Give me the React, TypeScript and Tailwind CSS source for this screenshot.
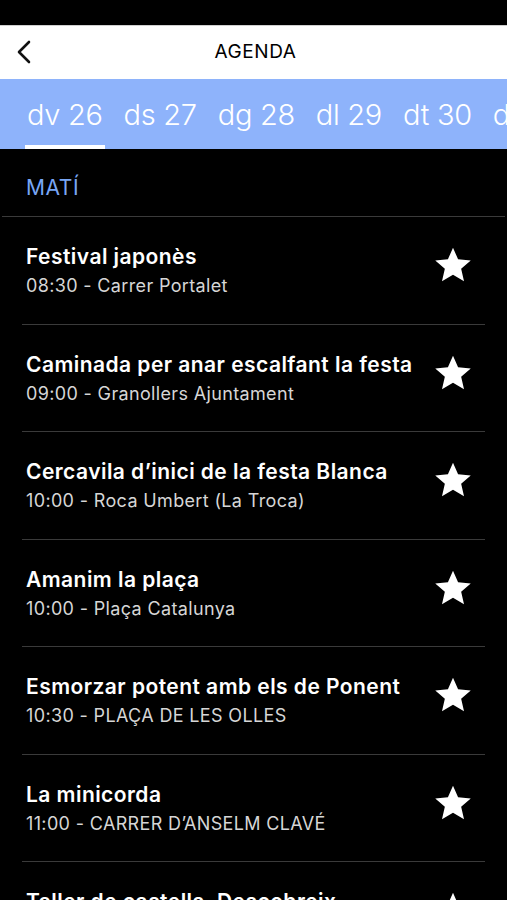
import React from "react";

const events = [
  { title: "Festival japonès", sub: "08:30 - Carrer Portalet" },
  { title: "Caminada per anar escalfant la festa", sub: "09:00 - Granollers Ajuntament" },
  { title: "Cercavila d’inici de la festa Blanca", sub: "10:00 - Roca Umbert (La Troca)" },
  { title: "Amanim la plaça", sub: "10:00 - Plaça Catalunya" },
  { title: "Esmorzar potent amb els de Ponent", sub: "10:30 - PLAÇA DE LES OLLES" },
  { title: "La minicorda", sub: "11:00 - CARRER D’ANSELM CLAVÉ" },
  { title: "Taller de castells. Descobreix", sub: "11:00 - Plaça de la Porxada" },
];

const tabs = ["dv 26", "ds 27", "dg 28", "dl 29", "dt 30", "dc 31"];

function Star() {
  return (
    <svg width="40" height="40" viewBox="0 0 24 24" className="shrink-0">
      <path
        d="M12 1.6l3.05 7.02 7.6.66-5.76 5.02 1.72 7.45L12 17.8l-6.61 3.95 1.72-7.45-5.76-5.02 7.6-.66z"
        fill="#ffffff"
      />
    </svg>
  );
}

export default function App() {
  return (
    <div
      className="w-[507px] h-[900px] overflow-hidden bg-black flex flex-col"
      style={{ fontFamily: "Inter, 'Noto Sans', sans-serif" }}
    >
      <div className="h-[25px] bg-black shrink-0" />
      <div className="h-[54px] bg-white shrink-0 relative flex items-center justify-center border-t border-[#cfcfcf]">
        <svg
          className="absolute left-[16px] top-[14px]"
          width="16"
          height="24"
          viewBox="0 0 16 24"
        >
          <path d="M13 2L3 12l10 10" stroke="#111" strokeWidth="2.6" fill="none" strokeLinecap="round" strokeLinejoin="round" />
        </svg>
        <span className="text-[19px] text-black tracking-[0.6px] pl-[4px]">AGENDA</span>
      </div>
      <div className="h-[70px] bg-[#8eb3fb] shrink-0 flex items-stretch overflow-hidden pl-[25px] gap-[17px] whitespace-nowrap">
        {tabs.map((t, i) => (
          <div key={t} className="relative flex items-center px-[2px]">
            <span className="text-[29px] text-white font-light leading-none tracking-[-0.3px]">{t}</span>
            {i === 0 && (
              <div className="absolute left-0 right-0 bottom-0 h-[4px] bg-white" />
            )}
          </div>
        ))}
      </div>
      <div className="h-[68px] shrink-0 flex items-center pl-[26px] pt-[10px] border-b border-[#3a3a3a] mx-[2px]">
        <span className="text-[21px] text-[#78a6f5] leading-none tracking-[0.6px] -ml-[2px]">MATÍ</span>
      </div>
      <div className="flex flex-col">
        {events.map((e) => (
          <div key={e.title} className="mx-[22px] border-b border-[#3a3a3a] h-[107.5px] shrink-0 flex items-center justify-between">
            <div className="flex flex-col pl-[4px] mt-[4px]">
              <span className="text-[21px] font-semibold text-white leading-[28px] tracking-[0.45px] whitespace-nowrap">{e.title}</span>
              <span className="text-[18px] text-[#d6d6d6] leading-[30px] tracking-[0.35px] whitespace-nowrap">{e.sub}</span>
            </div>
            <div className="mr-[12px] -mt-[10px]">
              <Star />
            </div>
          </div>
        ))}
      </div>
    </div>
  );
}
